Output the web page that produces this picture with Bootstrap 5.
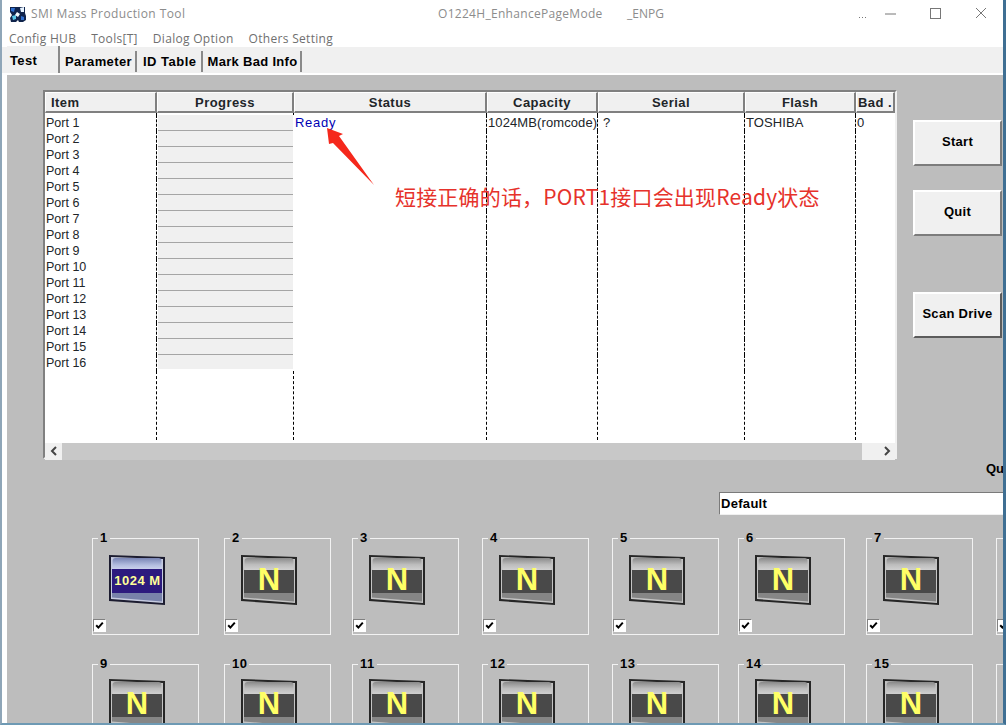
<!DOCTYPE html>
<html lang="en"><head><meta charset="utf-8"><title>SMI Mass Production Tool</title>
<link rel="stylesheet" href="https://cdn.jsdelivr.net/npm/bootstrap@5.3.0/dist/css/bootstrap.min.css">
<style>
html,body{margin:0;height:725px;overflow:hidden;background:#fff}
body{font-family:"Liberation Sans",Arial,sans-serif;font-size:12px;color:#000}
.appframe{width:1006px;height:725px;overflow:hidden;border-left:2px solid #8fa6b8;border-right:3px solid #3f6f93;border-bottom:2px solid #6e9ab4;background:#fff}
.titlebar{height:28px;padding-left:8px;color:#8c8c8c;font-family:"Open Sans",sans-serif;font-size:12px}
.titlebar .appname{margin-left:5px;width:407px;letter-spacing:.4px}
.titlebar .modename{width:189px;letter-spacing:.3px}
.titlebar .wintools{margin-left:auto;width:144px;color:#555}
.menustrip{height:19px;padding:1px 0 0 7px;gap:15px;color:#6f6f6f;font-family:"Open Sans",sans-serif;font-size:12px;line-height:19px;letter-spacing:.3px}
.tabstrip{height:28px;background:#f0f0f0;padding-left:5px;align-items:flex-end;border:0;border-bottom:2px solid #fff;flex-wrap:nowrap}
.tabstrip .nav-link{padding:0 3px 0 4px;height:21px;line-height:21px;margin:0 1px 1px 0;border:0;border-right:2px solid #8a8a8a;border-radius:0;background:#f0f0f0;color:#000;font-weight:700;font-size:13px;letter-spacing:.37px;white-space:nowrap}
.tabstrip .nav-link.active{height:27px;line-height:30px;width:53px;padding:0 3px;border-right:2px solid #8a8a8a;margin:0 1px 0 0;background:#f0f0f0;color:#000}
.tabstrip .nav-item:nth-child(3) .nav-link{padding-left:5px;padding-right:4px;letter-spacing:.5px}
.tabstrip .nav-item:nth-child(4) .nav-link{padding-left:4px;padding-right:3px;letter-spacing:.3px}
.workspace{height:650px;margin-left:5px;background:#bdbdbd;padding:15px 0 0 36px;overflow:hidden}
.toparea{gap:16px}
.portlist{position:relative;width:854px;height:369px;border:2px solid;border-color:#808080 #f0f0f0 #f0f0f0 #808080;background:#fff;flex:none}
.porttable{table-layout:fixed;width:850px;margin:0;border-collapse:separate;border-spacing:0;--bs-table-bg:transparent}
.porttable th{height:20px;padding:1px 0 0;text-align:center;font-size:13px;line-height:17px;letter-spacing:.45px;background:#f0f0f0;border:0;border-right:2px solid #808080;border-bottom:2px solid #808080;border-top:1px solid #fff;border-left:1px solid #fff}
.porttable th.leftcap{text-align:left;padding-left:5px}
.porttable td{height:16px;padding:0 0 0 1px;line-height:16px;font-size:13px;letter-spacing:.1px;border:0;border-right:1px dashed #000;white-space:nowrap;overflow:hidden;background:transparent;box-shadow:none}
.porttable td:first-child{font-size:12.500px;letter-spacing:0}
.porttable td:last-child{border-right:0}
.porttable td.barcell{background:#f0f0f0;border-right:1px solid #fff;padding:0;height:16px;box-shadow:inset 0 -1px 0 #a5a5a5;border-bottom:0;border-left:1px solid #fff}
.porttable tr:nth-last-child(2) td.barcell{box-shadow:inset 0 -2px 0 #fff}
.porttable td.barfill{background:transparent;height:69px}
.portsgap td{height:2px!important;line-height:2px}
.porttable td.readytext{color:#0000b4;letter-spacing:.7px}
.porttable td.serialval{padding-left:5px}
.hscroll{height:17px;margin-top:3px;background:#c8c8c8}
.hscroll .scrollend{width:17px;background:#f0f0f0;flex:none}
.hscroll .scrollrest{width:33px;margin-left:auto;background:#f0f0f0;flex:none;padding-left:21px}
.callout{position:absolute;left:350px;top:91px;color:#e6322b;font-family:"Noto Sans CJK SC",sans-serif;font-size:21px;line-height:26px;letter-spacing:.18px;white-space:nowrap}
.calloutarrow{position:absolute;left:270px;top:18px}
.sidebuttons{padding-top:30px;width:89px;flex:none}
.toolbtn{display:block;width:89px;height:46px;padding:0 0 2px;background:#f0f0f0;border:2px solid;border-color:#fff #7c7c7c #7c7c7c #fff;border-radius:0;color:#000;font-weight:700;font-size:13px;letter-spacing:.3px}
.toolbtn:hover{background:#f0f0f0;color:#000}
.toolbtn+.toolbtn{margin-top:24px}
.toolbtn.scanbtn{margin-top:56px;border-color:#fff #5c5c5c #5c5c5c #fff}
.quicklabel{height:16px;margin-top:2px;padding-left:943px;font-weight:700;font-size:13px;line-height:16px;white-space:nowrap}
.defaultbox{margin:15px 0 0 676px;width:300px;height:23px;border:0;border-radius:0;border-top:1px solid #7a7a7a;border-left:1px solid #7a7a7a;border-bottom:1px solid #f0f0f0;padding:0 1px;font-weight:700;font-size:13px;letter-spacing:.3px;line-height:20px;background:#fff;color:#000;box-shadow:none;font-family:"Liberation Sans",sans-serif}
.portgrid{display:grid;grid-template-columns:132px 128px 130px 130px 126px 128px 130px 130px;grid-auto-rows:126px;margin:23px 0 0 49px}
.portbox{position:relative;width:107px;height:97px;border:1px solid #f2f2f2;padding:15px 0 0 16px}
.portbox.lowerrow{padding-top:13px}
.portnum{position:absolute;left:5px;top:-9px;padding:0 2px;background:#bdbdbd;font-weight:700;font-size:13px;line-height:16px;letter-spacing:.4px}
.portbox svg{display:block}
.porttick{position:absolute;left:0;top:80px;width:13px;height:13px;margin:0;border:1px solid;border-color:#808080 #fff #fff #808080;border-radius:0;background-color:#fff;background-position:center;background-size:11px;background-repeat:no-repeat;opacity:1;appearance:none;background-image:url("data:image/svg+xml,%3Csvg xmlns='http://www.w3.org/2000/svg' viewBox='0 0 11 11'%3E%3Cpath d='M2.2 5.2 4.4 7.6 8.8 2.6' fill='none' stroke='%23000' stroke-width='2'/%3E%3C/svg%3E")}
.porttick:checked{background-color:#fff;border-color:#808080 #fff #fff #808080;background-image:url("data:image/svg+xml,%3Csvg xmlns='http://www.w3.org/2000/svg' viewBox='0 0 11 11'%3E%3Cpath d='M2.2 5.2 4.4 7.6 8.8 2.6' fill='none' stroke='%23000' stroke-width='2'/%3E%3C/svg%3E")}
.cardcap{font-family:"Liberation Sans",sans-serif;font-weight:700}
</style></head><body>
<svg width="0" height="0" class="d-block position-absolute">
<defs>
<linearGradient id="topshade" x1="0" y1="0" x2="0" y2="1"><stop offset="0" stop-color="#8a8a8a"/><stop offset=".5" stop-color="#bcbcbc"/><stop offset="1" stop-color="#d4d4d4"/></linearGradient>
<linearGradient id="topblue" x1="0" y1="0" x2="0" y2="1"><stop offset="0" stop-color="#7884b4"/><stop offset=".55" stop-color="#b4bee0"/><stop offset="1" stop-color="#d4daf0"/></linearGradient>
<g id="nchip">
<path d="M0 1 56 3V51L0 47Z" fill="#262626"/>
<path d="M2 3 54 5 54 49 2 45Z" fill="#c4c4c4"/>
<rect x="3.500" y="4" width="49" height="13" rx="3" fill="url(#topshade)"/>
<rect x="3" y="16" width="50" height="23" fill="#494949"/>
<path d="M3 39H53V47.500L3 43.500Z" fill="#868686"/>
<text x="28" y="36" text-anchor="middle" class="cardcap" font-size="31" fill="#ffff66">N</text>
</g>
</defs></svg>
<div class="appframe d-flex flex-column">
<div class="titlebar d-flex align-items-center flex-none">
<svg width="16" height="16" viewBox="0 0 16 16"><path d="M0 1H15V7L16 10V14L13 16H9L8 14 6 16H1L0 12 2 9 0 6Z" fill="#10244c"/><path d="M1 2 5 2 4 6 1 5Z" fill="#2f6fd0"/><path d="M10 2 14 1 14 6 11 6Z" fill="#e8f4ff"/><path d="M2 10 6 9 6 13 3 14Z" fill="#59c8e8"/><path d="M7 6 10 8 8 11 5 9Z" fill="#f4fbff"/><path d="M11 10 14 11 14 14 11 14Z" fill="#2f6fd0"/></svg>
<span class="appname">SMI Mass Production Tool</span>
<span class="modename">O1224H_EnhancePageMode</span>
<span>_ENPG</span>
<div class="wintools d-flex align-items-center">
<svg width="140" height="14" viewBox="0 0 140 14"><g fill="#777"><rect x="0" y="10" width="1" height="1"/><rect x="3" y="10" width="1" height="1"/><rect x="6" y="10" width="1" height="1"/></g><path d="M26 7H37" stroke="#777"/><rect x="71.500" y="1.500" width="10" height="10" fill="none" stroke="#777"/><path d="M117 1 127 11M127 1 117 11" stroke="#777"/></svg>
</div>
</div>
<div class="menustrip d-flex"><span>Config HUB</span><span>Tools[T]</span><span>Dialog Option</span><span>Others Setting</span></div>
<ul class="nav nav-tabs tabstrip">
<li class="nav-item"><a class="nav-link active" href="#">Test</a></li>
<li class="nav-item"><a class="nav-link" href="#">Parameter</a></li>
<li class="nav-item"><a class="nav-link" href="#">ID Table</a></li>
<li class="nav-item"><a class="nav-link" href="#">Mark Bad Info</a></li>
</ul>
<div class="workspace">
<div class="d-flex toparea">
<div class="portlist">
<table class="table porttable">
<colgroup><col style="width:112px"><col style="width:137px"><col style="width:193px"><col style="width:111px"><col style="width:147px"><col style="width:111px"><col style="width:39px"></colgroup>
<thead><tr><th class="leftcap">Item</th><th>Progress</th><th>Status</th><th>Capacity</th><th>Serial</th><th>Flash</th><th>Bad .</th></tr></thead>
<tbody>
<tr class="portsgap"><td></td><td></td><td></td><td></td><td></td><td></td><td></td></tr>
<tr><td>Port 1</td><td class="barcell"></td><td class="readytext">Ready</td><td>1024MB(romcode)</td><td class="serialval">?</td><td>TOSHIBA</td><td>0</td></tr>
<tr><td>Port 2</td><td class="barcell"></td><td></td><td></td><td></td><td></td><td></td></tr>
<tr><td>Port 3</td><td class="barcell"></td><td></td><td></td><td></td><td></td><td></td></tr>
<tr><td>Port 4</td><td class="barcell"></td><td></td><td></td><td></td><td></td><td></td></tr>
<tr><td>Port 5</td><td class="barcell"></td><td></td><td></td><td></td><td></td><td></td></tr>
<tr><td>Port 6</td><td class="barcell"></td><td></td><td></td><td></td><td></td><td></td></tr>
<tr><td>Port 7</td><td class="barcell"></td><td></td><td></td><td></td><td></td><td></td></tr>
<tr><td>Port 8</td><td class="barcell"></td><td></td><td></td><td></td><td></td><td></td></tr>
<tr><td>Port 9</td><td class="barcell"></td><td></td><td></td><td></td><td></td><td></td></tr>
<tr><td>Port 10</td><td class="barcell"></td><td></td><td></td><td></td><td></td><td></td></tr>
<tr><td>Port 11</td><td class="barcell"></td><td></td><td></td><td></td><td></td><td></td></tr>
<tr><td>Port 12</td><td class="barcell"></td><td></td><td></td><td></td><td></td><td></td></tr>
<tr><td>Port 13</td><td class="barcell"></td><td></td><td></td><td></td><td></td><td></td></tr>
<tr><td>Port 14</td><td class="barcell"></td><td></td><td></td><td></td><td></td><td></td></tr>
<tr><td>Port 15</td><td class="barcell"></td><td></td><td></td><td></td><td></td><td></td></tr>
<tr><td>Port 16</td><td class="barcell"></td><td></td><td></td><td></td><td></td><td></td></tr>
<tr><td class="barfill"></td><td class="barfill"></td><td class="barfill"></td><td class="barfill"></td><td class="barfill"></td><td class="barfill"></td><td class="barfill"></td></tr>
</tbody></table>
<div class="hscroll d-flex">
<div class="scrollend d-flex align-items-center justify-content-center"><svg width="8" height="10" viewBox="0 0 8 10"><path d="M6 1 2 5 6 9" fill="none" stroke="#444" stroke-width="2"/></svg></div>
<div class="scrollrest d-flex align-items-center"><svg width="8" height="10" viewBox="0 0 8 10"><path d="M2 1 6 5 2 9" fill="none" stroke="#444" stroke-width="2"/></svg></div>
</div>
<svg class="calloutarrow" width="70" height="80" viewBox="314 111 70 80"><path d="M326 129 342 135 338 137 373 186 332 144 328 145Z" fill="#f5281c"/></svg>
<div class="callout">短接正确的话，PORT1接口会出现Ready状态</div>
</div>
<div class="sidebuttons">
<button class="btn toolbtn">Start</button>
<button class="btn toolbtn">Quit</button>
<button class="btn toolbtn scanbtn">Scan Drive</button>
</div>
</div>
<div class="quicklabel">Qu</div>
<input class="form-control defaultbox" value="Default" readonly>
<div class="portgrid" id="portgrid"></div>
</div>
</div>
<script>
const grid=document.getElementById('portgrid');
const chip=n=>n===1?`<svg width="57" height="52" viewBox="0 0 57 52"><path d="M0 1 56 3V51L0 47Z" fill="#1c1c30"/><path d="M2 3 54 5V49L2 45Z" fill="#c6cbe0"/><rect x="3.500" y="4" width="49" height="13" rx="3" fill="url(#topblue)"/><rect x="3" y="15" width="50" height="24" fill="#2c1a7e"/><path d="M3 39H53V47.500L3 43.500Z" fill="#7882aa"/><text x="28.500" y="31" text-anchor="middle" class="cardcap" font-size="13" letter-spacing=".5" fill="#ffff99">1024 M</text></svg>`:`<svg width="57" height="52" viewBox="0 0 57 52"><use href="#nchip"/></svg>`;
for(let n=1;n<=16;n++){
const b=document.createElement('div');
b.className='portbox'+(n>8?' lowerrow':'');
b.innerHTML=`<span class="portnum">${n}</span>${chip(n)}<input type="checkbox" class="porttick" checked>`;
if(n===8||n===16){b.querySelector('.portnum').textContent=''}
grid.appendChild(b);
}
</script>
</body></html>
